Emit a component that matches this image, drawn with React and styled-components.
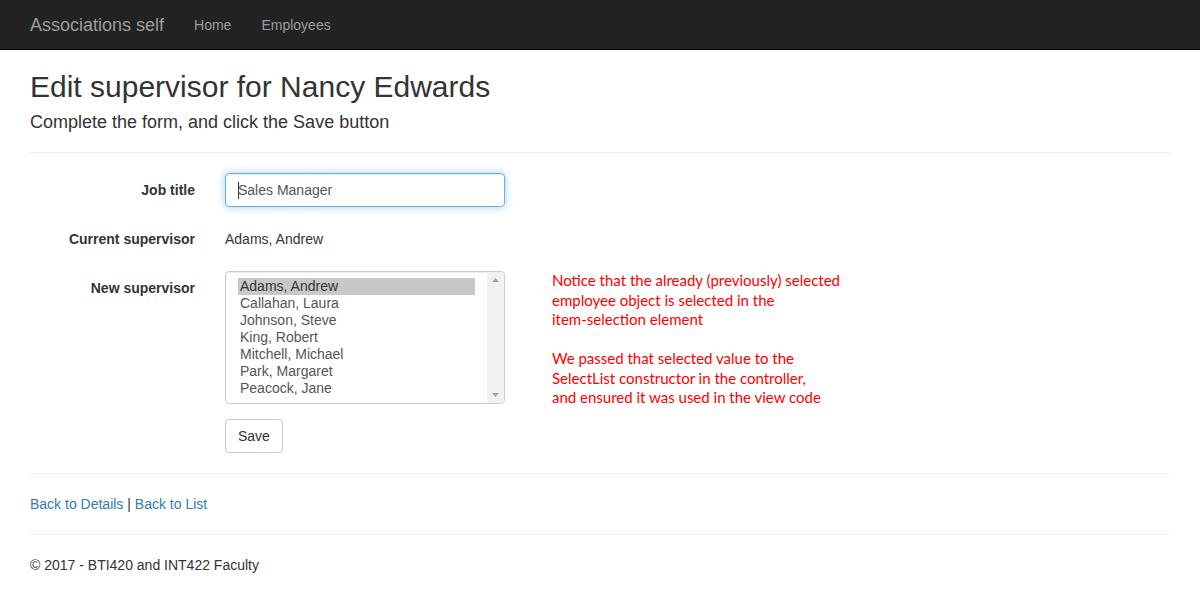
import React from 'react';
import styled, { createGlobalStyle } from 'styled-components';

const GlobalStyle = createGlobalStyle`
  * {
    box-sizing: border-box;
  }

  body {
    margin: 0;
    background: #fff;
    color: #333;
    font-family: "Liberation Sans", Arial, Helvetica, sans-serif;
    font-size: 14px;
    line-height: 1.42857143;
  }
`;

const Navbar = styled.nav`
  height: 50px;
  background: #222;
  border-bottom: 1px solid #080808;
`;

const NavContainer = styled.div`
  width: 1170px;
  margin: 0 auto;
  padding: 0 15px;
  display: flex;
  align-items: center;
`;

const Brand = styled.a`
  margin-left: -15px;
  padding: 15px;
  font-size: 18px;
  line-height: 20px;
  color: #9d9d9d;
  text-decoration: none;
`;

const NavLink = styled.a`
  padding: 15px;
  line-height: 20px;
  color: #9d9d9d;
  text-decoration: none;
`;

const Container = styled.main`
  width: 1170px;
  margin: 0 auto;
  padding: 0 15px 20px;
`;

const Title = styled.h2`
  margin: 20px 0 10px;
  font-size: 30px;
  font-weight: 500;
  line-height: 1.1;
`;

const Subtitle = styled.h4`
  margin: 10px 0 0;
  font-size: 18px;
  font-weight: 500;
  line-height: 19px;
`;

const Rule = styled.hr`
  margin: 20px 0;
  border: 0;
  border-top: 1px solid #eee;
`;

const Form = styled.form`
  margin: 0;
`;

const FormGroup = styled.div`
  display: flex;
  margin: 0 -15px ${(p) => (p.$last ? 0 : 15)}px;
`;

const Label = styled.label`
  width: 195px;
  padding: 7px 15px 0;
  text-align: right;
  font-weight: 700;
`;

const Field = styled.div`
  flex: 1;
  padding: 0 15px;
  display: flex;
  align-items: flex-start;
`;

const InputWrap = styled.div`
  position: relative;
  width: 280px;
`;

const Input = styled.input`
  display: block;
  width: 100%;
  height: 34px;
  padding: 6px 12px;
  font: inherit;
  color: #555;
  background: #fff;
  border: 1px solid #66afe9;
  border-radius: 4px;
  outline: 0;
  box-shadow: inset 0 1px 1px rgba(0, 0, 0, 0.075),
    0 0 8px rgba(102, 175, 233, 0.6);
`;

const Caret = styled.span`
  position: absolute;
  left: 13px;
  top: 9px;
  width: 1px;
  height: 17px;
  background: #333;
`;

const Static = styled.p`
  margin: 0;
  padding: 7px 0;
  min-height: 34px;
`;

const Listbox = styled.div`
  width: 280px;
  height: 133px;
  flex-shrink: 0;
  display: flex;
  border: 1px solid #ccc;
  border-radius: 4px;
  background: #fff;
  box-shadow: inset 0 1px 1px rgba(0, 0, 0, 0.075);
  overflow: hidden;
`;

const Options = styled.ul`
  flex: 1;
  margin: 0;
  padding: 6px 12px;
  list-style: none;
  color: #555;
  overflow: hidden;
`;

const Option = styled.li`
  padding: 0 2px 1px;
  line-height: 16px;
  white-space: nowrap;
  background: ${(p) => (p.$selected ? '#c8c8c8' : 'transparent')};
  color: ${(p) => (p.$selected ? '#333' : '#555')};
`;

const Scrollbar = styled.div`
  width: 17px;
  background: #f1f1f1;
  display: flex;
  flex-direction: column;
  justify-content: space-between;
  align-items: center;
  padding: 6px 0;
`;

const Note = styled.div`
  height: 133px;
  margin-left: 47px;
  color: #ff0000;
  font-family: Lato, "Noto Sans", sans-serif;
  font-size: 15px;
  line-height: 19.5px;

  p {
    margin: 0 0 19.5px;
  }
`;

const Button = styled.button`
  height: 34px;
  padding: 6px 12px;
  font: inherit;
  color: #333;
  background: #fff;
  border: 1px solid #ccc;
  border-radius: 4px;
  cursor: pointer;
`;

const Links = styled.p`
  margin: 0;
  color: #333;

  a {
    color: #337ab7;
    text-decoration: none;
  }
`;

const Footer = styled.footer`
  p {
    margin: 0 0 10px;
  }
`;

const Arrow = ({ down }) => (
  <svg width="7" height="4" viewBox="0 0 7 4">
    <path d={down ? 'M0 0H7L3.5 4Z' : 'M0 4H7L3.5 0Z'} fill="#a3a3a3" />
  </svg>
);

const employees = [
  'Adams, Andrew',
  'Callahan, Laura',
  'Johnson, Steve',
  'King, Robert',
  'Mitchell, Michael',
  'Park, Margaret',
  'Peacock, Jane',
];

function App() {
  return (
    <>
      <GlobalStyle />
      <Navbar>
        <NavContainer>
          <Brand href="#">Associations self</Brand>
          <NavLink href="#">Home</NavLink>
          <NavLink href="#">Employees</NavLink>
        </NavContainer>
      </Navbar>

      <Container>
        <Title>Edit supervisor for Nancy Edwards</Title>
        <Subtitle>Complete the form, and click the Save button</Subtitle>
        <Rule />

        <Form onSubmit={(e) => e.preventDefault()}>
          <FormGroup>
            <Label>Job title</Label>
            <Field>
              <InputWrap>
                <Input defaultValue="Sales Manager" />
                <Caret />
              </InputWrap>
            </Field>
          </FormGroup>

          <FormGroup>
            <Label>Current supervisor</Label>
            <Field>
              <Static>Adams, Andrew</Static>
            </Field>
          </FormGroup>

          <FormGroup>
            <Label>New supervisor</Label>
            <Field>
              <Listbox>
                <Options>
                  {employees.map((name, index) => (
                    <Option key={name} $selected={index === 0}>
                      {name}
                    </Option>
                  ))}
                </Options>
                <Scrollbar>
                  <Arrow />
                  <Arrow down />
                </Scrollbar>
              </Listbox>
              <Note>
                <p>
                  Notice that the already (previously) selected
                  <br />
                  employee object is selected in the
                  <br />
                  item-selection element
                </p>
                <p>
                  We passed that selected value to the
                  <br />
                  SelectList constructor in the controller,
                  <br />
                  and ensured it was used in the view code
                </p>
              </Note>
            </Field>
          </FormGroup>

          <FormGroup $last>
            <Label />
            <Field>
              <Button type="submit">Save</Button>
            </Field>
          </FormGroup>
        </Form>

        <Rule />
        <Links>
          <a href="#">Back to Details</a> | <a href="#">Back to List</a>
        </Links>
        <Rule />
        <Footer>
          <p>© 2017 - BTI420 and INT422 Faculty</p>
        </Footer>
      </Container>
    </>
  );
}

export default App;
